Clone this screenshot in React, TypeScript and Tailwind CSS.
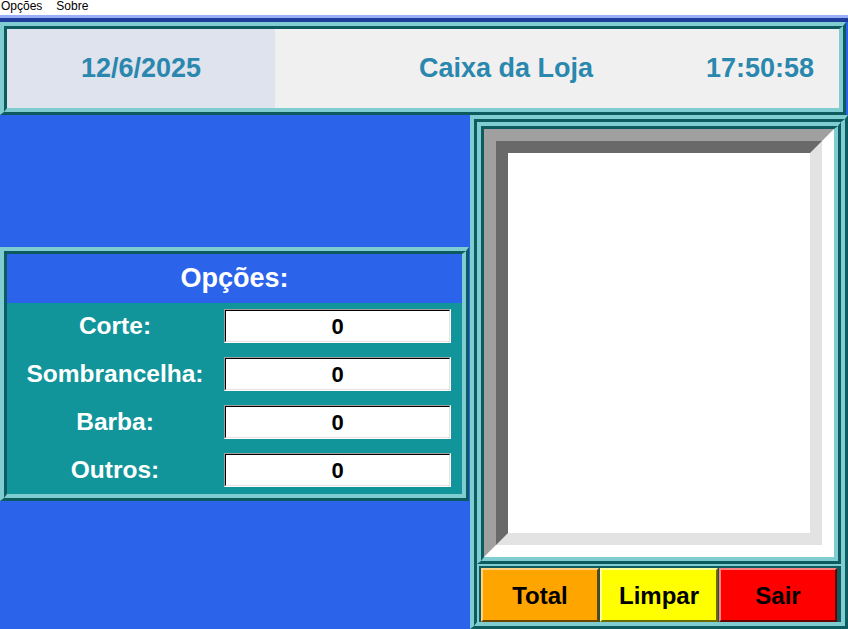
import React from "react";

const LIGHT = "border-[#7fccd1]";

// two nested borders: outer light top-left / dark bottom-right, inner the other way round
const Frame = ({ className = "", inner = "", children }: { className?: string; inner?: string; children?: React.ReactNode }) => (
  <div
    className={`flex border-t-4 border-l-4 border-r-[3px] border-b-[3px] border-t-[#7fccd1] border-l-[#7fccd1] border-r-[#0e5b5f] border-b-[#0e5b5f] ${className}`}
  >
    <div
      className={`flex flex-1 border-t-[3px] border-l-[3px] border-r-4 border-b-4 border-t-[#0e5b5f] border-l-[#0e5b5f] border-r-[#7fccd1] border-b-[#7fccd1] ${inner}`}
    >
      {children}
    </div>
  </div>
);

const rows = ["Corte:", "Sombrancelha:", "Barba:", "Outros:"];

const buttons = [
  { label: "Total", cls: "bg-[#ffa500] border-t-[#ffd280] border-l-[#ffd280] border-r-[#6b4500] border-b-[#6b4500]" },
  { label: "Limpar", cls: "bg-[#ffff00] border-t-[#ffff99] border-l-[#ffff99] border-r-[#6b6b00] border-b-[#6b6b00]" },
  { label: "Sair", cls: "bg-[#ff0000] border-t-[#ff8080] border-l-[#ff8080] border-r-[#6b0000] border-b-[#6b0000]" },
];

export default function App() {
  return (
    <div className="w-[848px] h-[629px] overflow-hidden bg-[#2b63eb] flex flex-col font-['Liberation_Sans',Arial,sans-serif]">
      {/* menu */}
      <div className="h-[15px] bg-white flex items-start gap-[14px] pl-[1px] text-[12px] leading-[13px] text-black">
        <span>Opções</span>
        <span>Sobre</span>
      </div>
      <div className="h-[3px] bg-[#98b0f8]" />
      <div className="h-[4px] bg-[#1f3d9c]" />

      {/* header */}
      <Frame className="w-[846px] h-[93px]" inner="items-stretch">
        <div className="w-[268px] bg-[#dfe3ee] flex items-center justify-center text-[27px] font-bold text-[#2a87ad]">
          12/6/2025
        </div>
        <div className="flex-1 bg-[#f0f0f0] flex items-center text-[27px] font-bold text-[#2a87ad]">
          <span className="ml-[144px]">Caixa da Loja</span>
          <span className="ml-auto mr-[25px]">17:50:58</span>
        </div>
      </Frame>

      <div className="flex flex-1">
        {/* options */}
        <div className="w-[470px] pt-[132px]">
          <Frame className="w-[469px] h-[254px]" inner="flex-col">
            <div className="h-[49px] flex items-center justify-center text-white font-bold text-[27px]">Opções:</div>
            <div className="flex-1 bg-[#11959a] flex flex-col gap-[14px] pt-[6px]">
              {rows.map((r) => (
                <div key={r} className="flex items-center h-[34px]">
                  <div className="w-[216px] text-center text-white font-bold text-[24.5px]">{r}</div>
                  <div className="ml-[1px] w-[227px] h-[34px] border border-t-[#a0a0a0] border-l-[#a0a0a0] border-r-white border-b-white">
                    <div className="h-full border border-t-black border-l-black border-r-[#e3e3e3] border-b-[#e3e3e3] bg-white flex items-center justify-center text-black font-bold text-[22px]">
                      0
                    </div>
                  </div>
                </div>
              ))}
            </div>
          </Frame>
        </div>

        {/* display + buttons */}
        <Frame className="w-[378px] h-[514px]" inner="flex-col">
          <Frame className="h-[442px]">
            <div className="flex flex-1 border-[12px] border-t-[#a0a0a0] border-l-[#a0a0a0] border-r-white border-b-white">
              <div className="flex-1 border-[12px] border-t-[#696969] border-l-[#696969] border-r-[#e3e3e3] border-b-[#e3e3e3] bg-white" />
            </div>
          </Frame>
          <div className={`flex flex-1 border-t-2 border-l-2 ${LIGHT} border-r-0 border-b-0`}>
            <div className="flex flex-1 gap-[1px] border-t-2 border-l-2 border-r-[3px] border-t-[#0e5b5f] border-l-[#0e5b5f] border-r-[#0e5b5f] pr-[1px] bg-[#0e5b5f]">
              {buttons.map((b) => (
                <div
                  key={b.label}
                  className={`flex-1 flex items-center justify-center border-2 pt-[2px] text-black font-bold text-[24px] ${b.cls}`}
                >
                  {b.label}
                </div>
              ))}
            </div>
          </div>
        </Frame>
      </div>
    </div>
  );
}
